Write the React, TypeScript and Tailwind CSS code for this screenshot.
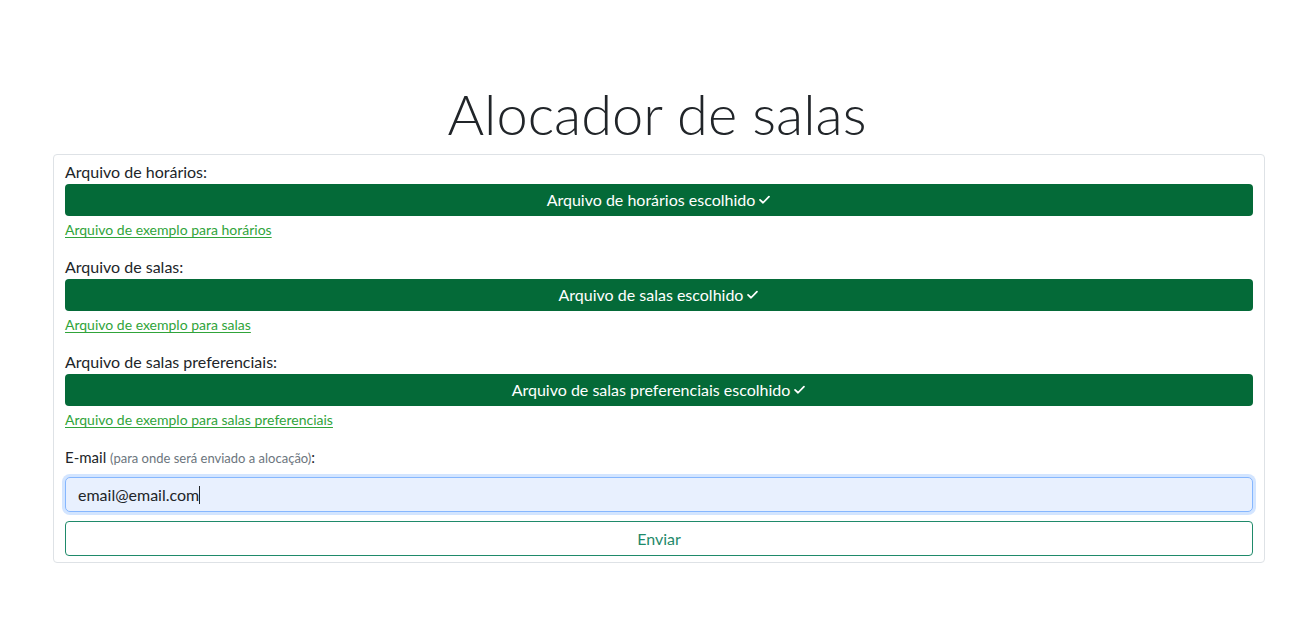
import React from "react";

const Check = () => (
  <svg width="13" height="13" viewBox="0 0 16 16" className="inline-block ml-[3px] -mt-[2px]" fill="none">
    <path d="M2.5 8.5 L6.2 12 L13.5 4.5" stroke="white" strokeWidth="2.2" strokeLinecap="round" strokeLinejoin="round" />
  </svg>
);

function FileSection({ label, chosen, link }: { label: string; chosen: string; link: string }) {
  return (
    <div className="flex flex-col">
      <div className="h-6 leading-6 text-[16px] text-[#212529]">{label}</div>
      <div className="h-8 rounded-[4px] bg-[#046a38] text-white flex items-center justify-center text-[16px]">
        {chosen}
        <Check />
      </div>
      <div className="mt-1 h-5 leading-5 flex items-center">
        <a href="#" className="text-[14px] text-[#30a43a] underline underline-offset-2">{link}</a>
      </div>
    </div>
  );
}

export default function App() {
  return (
    <div className="min-h-screen bg-white" style={{ fontFamily: "Lato, 'Noto Sans', sans-serif" }}>
      <div className="pt-[78px] flex justify-center">
        <h1 className="text-[56px] leading-[72px] font-light text-[#212529]">Alocador de salas</h1>
      </div>
      <div className="mx-[53px] mt-[4px] w-[1212px] border border-[#dee2e6] rounded-[4px] px-[11px] pt-[5px] pb-[6px]">
        <div className="flex flex-col gap-[15px]">
          <FileSection label="Arquivo de horários:" chosen="Arquivo de horários escolhido" link="Arquivo de exemplo para horários" />
          <FileSection label="Arquivo de salas:" chosen="Arquivo de salas escolhido" link="Arquivo de exemplo para salas" />
          <FileSection label="Arquivo de salas preferenciais:" chosen="Arquivo de salas preferenciais escolhido" link="Arquivo de exemplo para salas preferenciais" />
        </div>
        <div className="mt-[15px] h-6 leading-6 text-[15px] text-[#212529]">
          E-mail <span className="text-[13px] text-[#6c757d]">(para onde será enviado a alocação)</span>:
        </div>
        <div className="mt-2 h-[35px] rounded-[5px] border border-[#86b7fe] bg-[#e8f0fe] shadow-[0_0_0_3px_rgba(13,110,253,0.18)] flex items-center pl-3 text-[16px] text-[#212529]">
          email@email.com<span className="inline-block w-px h-[18px] bg-[#212529]" />
        </div>
        <button className="mt-[9px] w-full h-[35px] rounded-[4px] border border-[#1f8a6a] text-[#1f8a6a] text-[16px] bg-white">
          Enviar
        </button>
      </div>
    </div>
  );
}
